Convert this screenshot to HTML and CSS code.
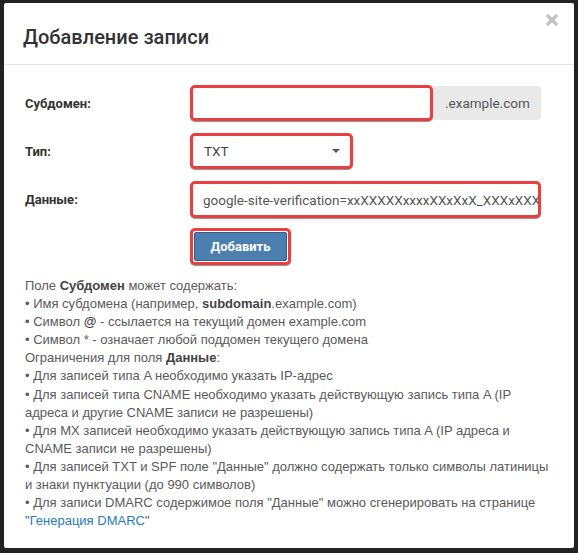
FILE: index.html
```html
<!DOCTYPE html>
<html lang="ru">
<head>
<meta charset="utf-8">
<link rel="stylesheet" href="styles.css">
</head>
<body>
<div class="modal">
  <div class="modal-header">
    <h4 class="title">Добавление записи</h4>
    <svg class="close" width="12" height="12" viewBox="0 0 12 12" aria-label="Закрыть"><path d="M2 2 L10 10 M10 2 L2 10" stroke="#c2c2c2" stroke-width="3.4" stroke-linecap="round"/></svg>
  </div>
  <div class="modal-body">
    <div class="row">
      <label class="label">Субдомен:</label>
      <div class="group">
        <div class="hl hl-sub"><input class="input" type="text" value=""></div>
        <span class="addon">.example.com</span>
      </div>
    </div>
    <div class="row">
      <label class="label">Тип:</label>
      <div class="hl hl-select">
        <div class="select"><span>TXT</span><span class="caret"></span></div>
      </div>
    </div>
    <div class="row">
      <label class="label">Данные:</label>
      <div class="hl hl-data"><div class="input data">google-site-verification=xxXXXXXxxxxXXxXxX_XXXxXXXxxXXx</div></div>
    </div>
    <div class="row row-btn">
      <span class="label"></span>
      <div class="hl hl-btn"><button class="btn">Добавить</button></div>
    </div>
    <div class="help">
      <div>Поле <b>Субдомен</b> может содержать:</div>
      <div>• Имя субдомена (например, <b>subdomain</b>.example.com)</div>
      <div>• Символ <b>@</b> - ссылается на текущий домен example.com</div>
      <div>• Символ * - означает любой поддомен текущего домена</div>
      <div>Ограничения для поля <b>Данные</b>:</div>
      <div>• Для записей типа A необходимо указать IP-адрес</div>
      <div>• Для записей типа CNAME необходимо указать действующую запись типа A (IP адреса и другие CNAME записи не разрешены)</div>
      <div>• Для MX записей необходимо указать действующую запись типа A (IP адреса и CNAME записи не разрешены)</div>
      <div>• Для записей TXT и SPF поле "Данные" должно содержать только символы латиницы и знаки пунктуации (до 990 символов)</div>
      <div>• Для записи DMARC содержимое поля "Данные" можно сгенерировать на странице "<a class="link" href="#">Генерация DMARC</a>"</div>
    </div>
  </div>
</div>
</body>
</html>
```
FILE: styles.css
```css
html, body {
  margin: 0;
  padding: 0;
}
body {
  background: #222222;
  width: 578px;
  height: 553px;
  overflow: hidden;
  padding: 3px 4px;
  box-sizing: border-box;
  font-family: Roboto, "Liberation Sans", Arial, sans-serif;
}
.modal {
  width: 570px;
  height: 545px;
  background: #fff;
  border-radius: 2px;
  box-sizing: border-box;
}
.modal-header {
  height: 61px;
  border-bottom: 1px solid #e5e5e5;
  display: flex;
  align-items: center;
  padding: 0 18px 0 19px;
  position: relative;
}
.title {
  margin: 6px 0 0 0;
  font-size: 20px;
  font-weight: 500;
  color: #333;
}
.close {
  position: absolute;
  right: 16px;
  top: 11px;
}
.modal-body {
  padding: 20px 21px 0 21px;
}
.row {
  display: flex;
  align-items: center;
  margin-bottom: 12px;
}
.label {
  width: 165px;
  font-size: 13px;
  font-weight: bold;
  color: #333;
}
.group {
  display: flex;
  align-items: center;
}
.hl {
  border: 3px solid #e8403f;
  border-radius: 5px;
  box-shadow: 0 1px 1px rgba(0,0,0,0.45);
  box-sizing: border-box;
  background: #fff;
}
.hl-sub { width: 243px; height: 36px; }
.hl-select { width: 163px; height: 36px; }
.hl-data { width: 351px; height: 37px; }
.hl-btn { width: 101px; height: 37px; padding: 1px; }
.input {
  border: 0;
  outline: none;
  width: 100%;
  height: 100%;
  box-sizing: border-box;
  padding: 0 11px;
  font-family: inherit;
  font-size: 13.5px;
  color: #555;
  background: transparent;
}
.data {
  display: flex;
  align-items: center;
  white-space: nowrap;
  overflow: hidden;
  padding: 0 10px;
  color: #555;
}
.addon {
  height: 34px;
  width: 108px;
  background: #e9e9e9;
  border-radius: 0 4px 4px 0;
  display: flex;
  align-items: center;
  padding-left: 12px;
  box-sizing: border-box;
  font-size: 13.5px;
  color: #555;
}
.select {
  display: flex;
  align-items: center;
  justify-content: space-between;
  height: 100%;
  padding: 0 10px 0 11px;
  font-size: 13.5px;
  color: #444;
}
.caret {
  width: 0;
  height: 0;
  border-left: 4px solid transparent;
  border-right: 4px solid transparent;
  border-top: 4px solid #555;
}
.row-btn { margin-bottom: 12px; margin-top: -2px; }
.btn {
  width: 100%;
  height: 100%;
  border: 1px solid #2e5f8a;
  border-radius: 2px;
  background: #4a7fb0;
  color: #fff;
  font-family: inherit;
  font-weight: bold;
  font-size: 13px;
  padding: 0;
}
.help {
  font-family: "Liberation Sans", Arial, sans-serif;
  font-size: 13px;
  line-height: 18.1px;
  color: #5a5a5a;
}
.help b {
  color: #444;
}
.link {
  color: #2a7ab8;
  text-decoration: none;
}
```
